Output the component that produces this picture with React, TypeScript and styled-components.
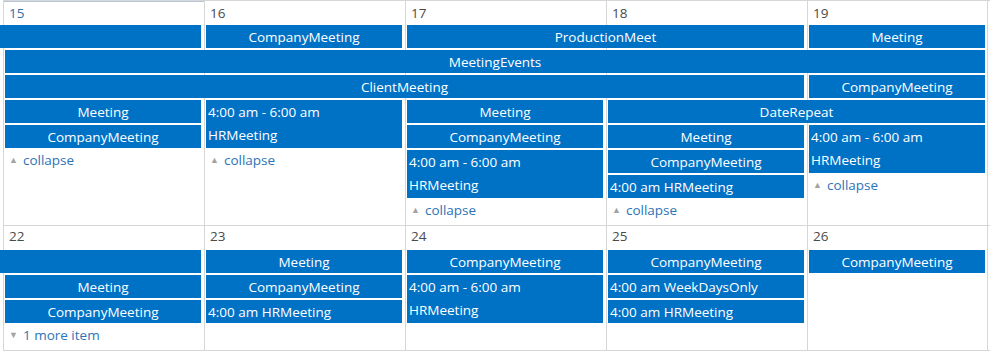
import React from "react";
import styled, { createGlobalStyle } from "styled-components";

const Global = createGlobalStyle`
  html, body { margin: 0; padding: 0; background: #ffffff; }
  body { font-family: "Open Sans", "Noto Sans", sans-serif; }
  * { box-sizing: border-box; }
`;

type Ev = {
  col: number;
  span?: number;
  row: number;
  rows?: number;
  title?: string;
  time?: string;
  left?: boolean;
  cont?: boolean;
};

type LinkItem = { col: number; row: number; text: string; up: boolean };

type WeekData = {
  days: string[];
  rows: number;
  events: Ev[];
  links: LinkItem[];
  today?: number;
  first?: boolean;
};

const Calendar = styled.div`
  width: 990px;
  height: 351px;
  padding-left: 3px;
  overflow: hidden;
`;

const Week = styled.div<{ $rows: number; $first?: boolean }>`
  display: grid;
  grid-template-columns: 201px 201px 201px 201px 181px;
  grid-template-rows: 24px repeat(${(p) => p.$rows}, 25px);
  border-top: ${(p) => (p.$first ? "1px solid #d6d6d6" : "none")};
  border-bottom: 1px solid #d6d6d6;
`;

const DayCell = styled.div<{ $col: number; $last: boolean; $today: boolean }>`
  grid-column: ${(p) => p.$col};
  grid-row: 1 / -1;
  border-left: 1px solid #d6d6d6;
  border-right: ${(p) => (p.$last ? "1px solid #d6d6d6" : "none")};
  box-shadow: ${(p) => (p.$today ? "inset 0 1px 0 #b4c6d8" : "none")};
`;

const DayNum = styled.div<{ $col: number; $today: boolean; $first?: boolean }>`
  grid-column: ${(p) => p.$col};
  grid-row: 1;
  padding: ${(p) => (p.$first ? "3px" : "1px")} 0 0 6px;
  font-size: 13.5px;
  line-height: 18px;
  color: ${(p) => (p.$today ? "#2f6eaa" : "#4a4a4a")};
`;

const Bar = styled.div<{
  $col: number;
  $span: number;
  $row: number;
  $rows: number;
  $left: boolean;
  $cont: boolean;
}>`
  grid-column: ${(p) => `${p.$col} / span ${p.$span}`};
  grid-row: ${(p) => `${p.$row + 1} / span ${p.$rows}`};
  margin: 0 3px 2px ${(p) => (p.$cont ? "-3px" : "2px")};
  background: #0072c6;
  color: #ffffff;
  font-size: 13.5px;
  line-height: 23px;
  padding-top: 1px;
  text-align: ${(p) => (p.$left ? "left" : "center")};
  padding-left: ${(p) => (p.$left ? "2px" : "0")};
  white-space: nowrap;
  overflow: hidden;
  position: relative;
  z-index: 1;
`;

const MoreLink = styled.div<{ $col: number; $row: number }>`
  grid-column: ${(p) => p.$col};
  grid-row: ${(p) => p.$row + 1};
  padding: 1px 0 0 6px;
  display: flex;
  align-items: flex-start;
  gap: 5px;
  font-size: 13.5px;
  line-height: 18px;
  color: #2d74b6;
  position: relative;
  z-index: 1;
`;

const Arrow = styled.span`
  color: #a3a3a3;
  font-size: 9px;
  line-height: 18px;
`;

const weeks: WeekData[] = [
  {
    days: ["15", "16", "17", "18", "19"],
    rows: 8,
    today: 1,
    first: true,
    events: [
      { col: 1, row: 1, cont: true },
      { col: 2, row: 1, title: "CompanyMeeting" },
      { col: 3, span: 2, row: 1, title: "ProductionMeet" },
      { col: 5, row: 1, title: "Meeting" },
      { col: 1, span: 5, row: 2, title: "MeetingEvents" },
      { col: 1, span: 4, row: 3, title: "ClientMeeting" },
      { col: 5, row: 3, title: "CompanyMeeting" },
      { col: 1, row: 4, title: "Meeting" },
      { col: 1, row: 5, title: "CompanyMeeting" },
      { col: 2, row: 4, rows: 2, time: "4:00 am - 6:00 am", title: "HRMeeting", left: true },
      { col: 3, row: 4, title: "Meeting" },
      { col: 3, row: 5, title: "CompanyMeeting" },
      { col: 3, row: 6, rows: 2, time: "4:00 am - 6:00 am", title: "HRMeeting", left: true },
      { col: 4, span: 2, row: 4, title: "DateRepeat" },
      { col: 4, row: 5, title: "Meeting" },
      { col: 4, row: 6, title: "CompanyMeeting" },
      { col: 4, row: 7, title: "4:00 am HRMeeting", left: true },
      { col: 5, row: 5, rows: 2, time: "4:00 am - 6:00 am", title: "HRMeeting", left: true },
    ],
    links: [
      { col: 1, row: 6, text: "collapse", up: true },
      { col: 2, row: 6, text: "collapse", up: true },
      { col: 3, row: 8, text: "collapse", up: true },
      { col: 4, row: 8, text: "collapse", up: true },
      { col: 5, row: 7, text: "collapse", up: true },
    ],
  },
  {
    days: ["22", "23", "24", "25", "26"],
    rows: 4,
    events: [
      { col: 1, row: 1, cont: true },
      { col: 2, row: 1, title: "Meeting" },
      { col: 3, row: 1, title: "CompanyMeeting" },
      { col: 4, row: 1, title: "CompanyMeeting" },
      { col: 5, row: 1, title: "CompanyMeeting" },
      { col: 1, row: 2, title: "Meeting" },
      { col: 2, row: 2, title: "CompanyMeeting" },
      { col: 3, row: 2, rows: 2, time: "4:00 am - 6:00 am", title: "HRMeeting", left: true },
      { col: 4, row: 2, title: "4:00 am WeekDaysOnly", left: true },
      { col: 1, row: 3, title: "CompanyMeeting" },
      { col: 2, row: 3, title: "4:00 am HRMeeting", left: true },
      { col: 4, row: 3, title: "4:00 am HRMeeting", left: true },
    ],
    links: [{ col: 1, row: 4, text: "1 more item", up: false }],
  },
];

export default function App() {
  return (
    <>
      <Global />
      <Calendar>
        {weeks.map((w, wi) => (
          <Week key={wi} $rows={w.rows} $first={w.first}>
            {w.days.map((d, i) => (
              <DayCell key={"c" + d} $col={i + 1} $last={i === 4} $today={w.today === i + 1} />
            ))}
            {w.days.map((d, i) => (
              <DayNum key={"n" + d} $col={i + 1} $today={w.today === i + 1} $first={w.first}>
                {d}
              </DayNum>
            ))}
            {w.events.map((e, ei) => (
              <Bar
                key={ei}
                $col={e.col}
                $span={e.span ?? 1}
                $row={e.row}
                $rows={e.rows ?? 1}
                $left={!!e.left}
                $cont={!!e.cont}
              >
                {e.time ? (
                  <>
                    {e.time}
                    <br />
                    {e.title}
                  </>
                ) : (
                  e.title ?? ""
                )}
              </Bar>
            ))}
            {w.links.map((l, li) => (
              <MoreLink key={"l" + li} $col={l.col} $row={l.row}>
                <Arrow>{l.up ? "▲" : "▼"}</Arrow>
                {l.text}
              </MoreLink>
            ))}
          </Week>
        ))}
      </Calendar>
    </>
  );
}
